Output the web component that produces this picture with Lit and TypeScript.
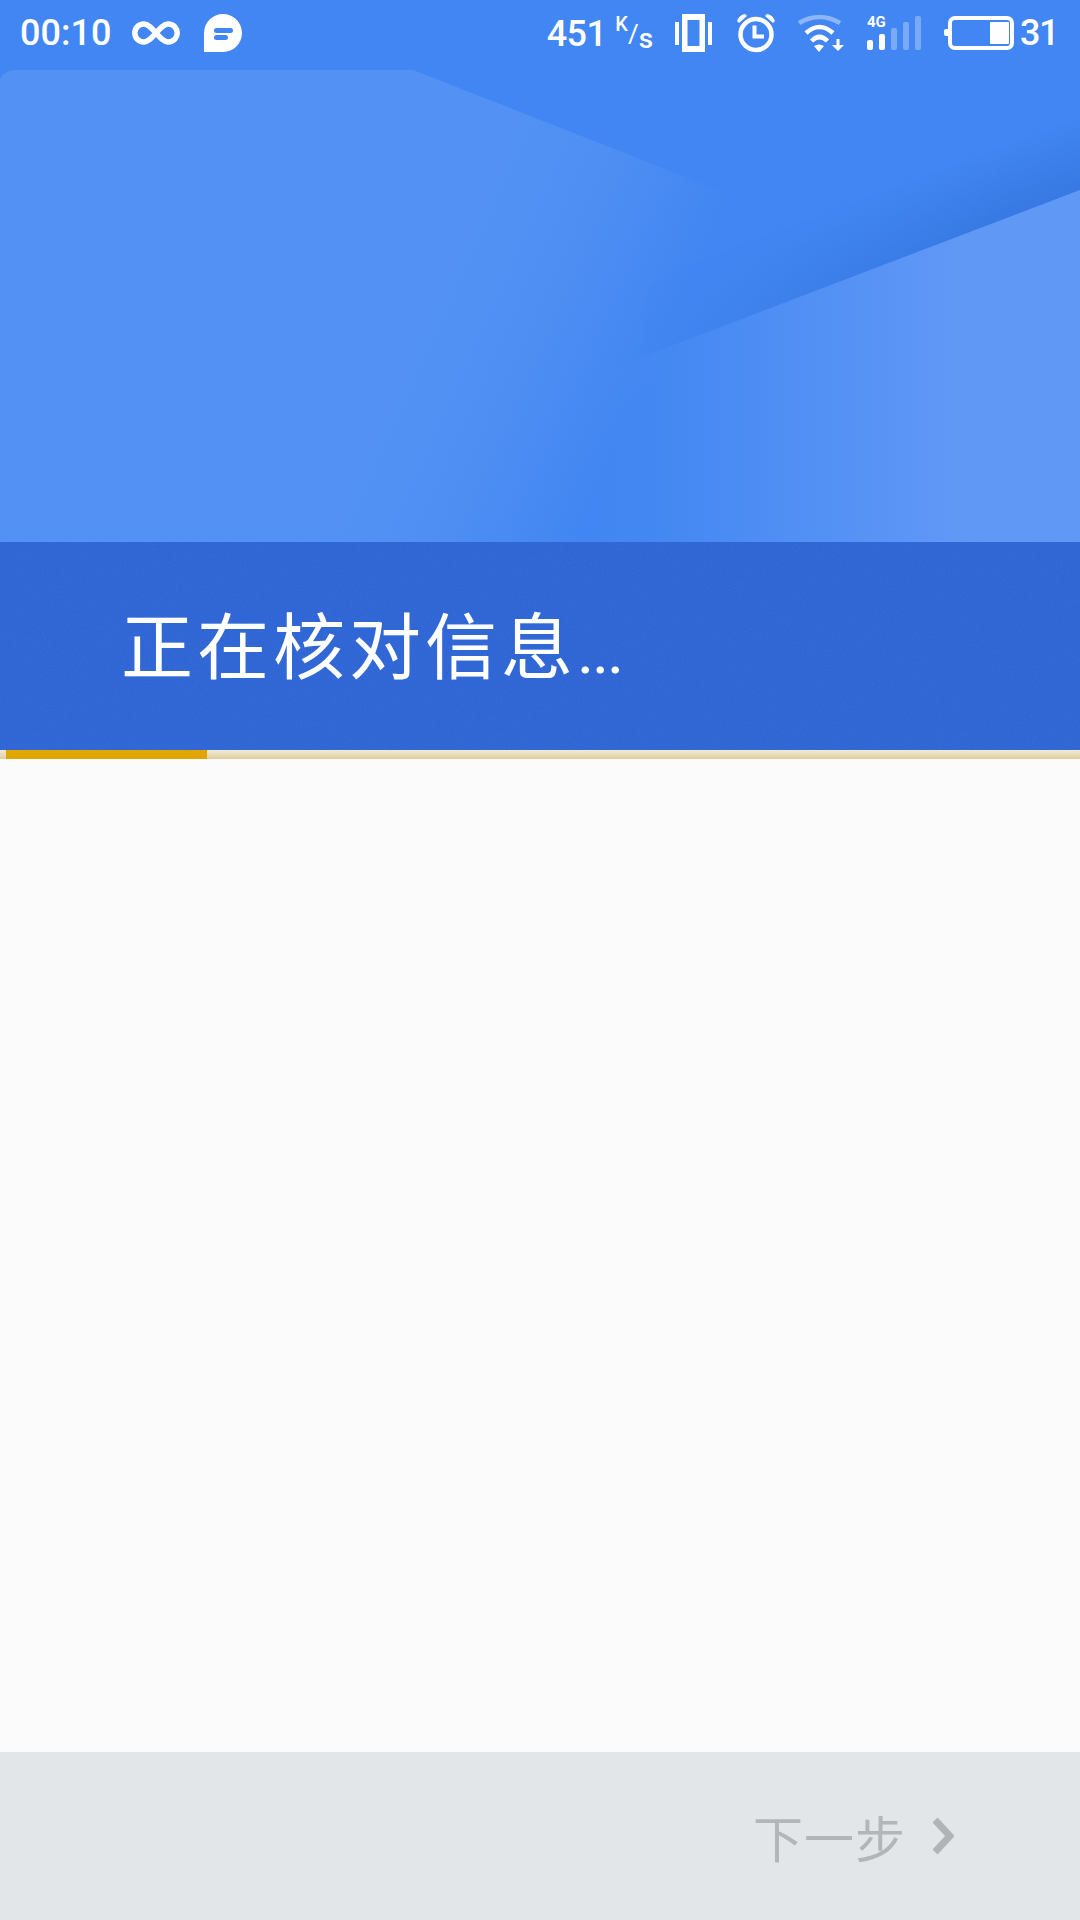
import { LitElement, html, css, svg } from "lit";
import { customElement } from "lit/decorators.js";

@customElement("app-root")
export class AppRoot extends LitElement {
  static styles = css`
    :host { display: block; width: 1080px; height: 1920px; background: #fbfbfb; font-family: Roboto, "Noto Sans CJK SC", sans-serif; overflow: hidden; }
    .page { display: flex; flex-direction: column; height: 1920px; }
    .hero { position: relative; height: 750px; flex: none; background: #4186f2; overflow: hidden; display: flex; flex-direction: column; }
    .art { position: absolute; left: 0; top: 0; width: 1080px; height: 545px; }
    .status { position: relative; height: 66px; display: flex; align-items: center; padding: 0 22px 0 20px; color: #fff; font-size: 36px; font-weight: 500; }
    .left, .right { display: flex; align-items: center; }
    .right { margin-left: auto; }
    .speed { display: block; white-space: nowrap; letter-spacing: -0.6px; }
    .k { font-size: 20px; margin-left: 9px; vertical-align: 15px; letter-spacing: 0; }
    .slash { font-size: 26px; font-weight: 400; vertical-align: 3px; letter-spacing: 0; }
    .s { font-size: 28px; vertical-align: -2px; letter-spacing: 0; }
    .inf { margin-left: 21px; }
    .bubble { margin-left: 24px; }
    .vib { margin-left: 22px; }
    .alarm { margin-left: 24px; }
    .wifi { margin-left: 21px; }
    .sig { position: relative; margin-left: 23px; width: 54px; height: 34px; }
    .sig-label { position: absolute; left: 0; top: -1px; font-size: 15px; font-weight: 700; line-height: 14px; letter-spacing: -0.3px; }
    .bars { position: absolute; left: 0; top: 0; }
    .batt { margin-left: 23px; }
    .level { margin-left: 6px; letter-spacing: -1.5px; }
    .band { position: relative; margin-top: auto; height: 208px; background: #2f66d5; display: flex; align-items: center; padding: 0 0 10px 121px; box-sizing: border-box; color: #fff; font-family: "Noto Sans CJK SC", sans-serif; font-size: 72px; font-weight: 400; letter-spacing: 4px; }
    .noise { position: absolute; inset: 0; width: 100%; height: 100%; opacity: 0.03; }
    .title { position: relative; }
    .dots { font-family: Roboto, sans-serif; font-size: 54px; font-weight: 500; letter-spacing: 0; margin-left: 1px; }
    .track { height: 9px; flex: none; background: linear-gradient(#f2ead2, #dccf9d); display: flex; padding-left: 6px; }
    .fill { width: 201px; background: #e0a500; }
    .body { flex: 1; }
    .foot { height: 168px; flex: none; background: #e2e6e8; display: flex; align-items: center; justify-content: flex-end; padding: 0 126px 0 0; color: #b2b6b8; font-family: "Noto Sans CJK SC", sans-serif; font-size: 50px; font-weight: 400; letter-spacing: 1px; gap: 26px; }
    svg { display: block; flex: none; }
  `;

  render() {
    return html`<div class="page">
      <div class="hero">
        <svg class="art" viewBox="0 0 1080 545">
          <defs>
            <linearGradient id="a" gradientUnits="userSpaceOnUse" x1="430" y1="290" x2="650" y2="390">
              <stop offset="0" stop-color="#5392f4"/><stop offset=".5" stop-color="#4e8ef3"/><stop offset="1" stop-color="#4c8cf3" stop-opacity="0"/>
            </linearGradient>
            <linearGradient id="b" gradientUnits="userSpaceOnUse" x1="590" x2="960" y1="0" y2="0">
              <stop offset="0" stop-color="#6098f6" stop-opacity="0"/><stop offset=".2" stop-color="#6098f6" stop-opacity=".1"/><stop offset=".5" stop-color="#6098f6" stop-opacity=".45"/><stop offset="1" stop-color="#6098f6"/>
            </linearGradient>
            <linearGradient id="s" gradientUnits="userSpaceOnUse" x1="1080" y1="190" x2="1056" y2="126">
              <stop offset="0" stop-color="#3270d8" stop-opacity=".6"/><stop offset="1" stop-color="#3270d8" stop-opacity="0"/>
            </linearGradient>
            <linearGradient id="sf" gradientUnits="userSpaceOnUse" x1="640" x2="1000" y1="0" y2="0">
              <stop offset="0" stop-color="#fff" stop-opacity="0"/><stop offset="1" stop-color="#fff"/>
            </linearGradient>
            <mask id="sm" maskUnits="userSpaceOnUse" x="0" y="0" width="1080" height="545"><rect width="1080" height="545" fill="url(#sf)"/></mask>
            <filter id="n" x="0" y="0" width="100%" height="100%">
              <feTurbulence type="fractalNoise" baseFrequency="0.55" numOctaves="2" seed="4"/>
              <feColorMatrix values="0 0 0 0 1  0 0 0 0 1  0 0 0 0 1  0 0 0 1.6 -0.5"/>
            </filter>
          </defs>
          <path d="M0 82 Q0 72 14 70 L413 70 L800 222 L800 545 L0 545 Z" fill="url(#a)"/>
          <path d="M1080 100 L640 270 L634 360 L1080 190 Z" fill="url(#s)" mask="url(#sm)"/>
          <path d="M1080 190 L634 360 L590 385 L590 545 L1080 545 Z" fill="url(#b)"/>
        </svg>
        ${this.statusBar()}
        <div class="band">
          <svg class="noise" preserveAspectRatio="none"><rect width="100%" height="100%" filter="url(#n)"/></svg>
          <span class="title">正在核对信息<span class="dots">...</span></span>
        </div>
      </div>
      <div class="track"><div class="fill"></div></div>
      <div class="body"></div>
      <div class="foot">
        <span>下一步</span>
        <svg width="22" height="38" viewBox="0 0 22 38"><path d="M3 3 L18 19 L3 35" fill="none" stroke="#b0b4b6" stroke-width="7"/></svg>
      </div>
    </div>`;
  }

  statusBar() {
    return html`<div class="status">
      <div class="left">
        <span>00:10</span>
        <svg class="inf" width="48" height="24" viewBox="0 0 48 24"><path d="M12 3 C6 3 2.800 7.500 2.800 12 C2.800 16.500 6 21 12 21 C20 21 28 3 36 3 C42 3 45.200 7.500 45.200 12 C45.200 16.500 42 21 36 21 C28 21 20 3 12 3 Z" fill="none" stroke="#fff" stroke-width="5.500"/></svg>
        <svg class="bubble" width="38" height="38" viewBox="0 0 38 38"><path fill-rule="evenodd" d="M0 38 V19 A19 19 0 1 1 19 38 Z M12.500 14 a2.500 2.500 0 0 0 0 5 h14 a2.500 2.500 0 0 0 0 -5 Z M12.500 21 a2.500 2.500 0 0 0 0 5 h9 a2.500 2.500 0 0 0 0 -5 Z" fill="#fff"/></svg>
      </div>
      <div class="right">
        <span class="speed">451<span class="k">K</span><span class="slash">/</span><span class="s">s</span></span>
        <svg class="vib" width="37" height="38" viewBox="0 0 37 38"><path fill-rule="evenodd" d="M7 0 H30 V38 H7 Z M12.500 6 V32 H24.500 V6 Z M0 8 H4 V31 H0 Z M33 8 H37 V31 H33 Z" fill="#fff"/></svg>
        <svg class="alarm" width="40" height="40" viewBox="0 0 40 40"><g fill="none" stroke="#fff"><circle cx="20" cy="21.500" r="15.500" stroke-width="4.500"/><path d="M18.500 12.500 V23.500 H28" stroke-width="4"/></g><path d="M1 8 Q3 2 9 1 L11 3 L3 10 Z M39 8 Q37 2 31 1 L29 3 L37 10 Z" fill="#fff"/></svg>
        <svg class="wifi" width="47" height="40" viewBox="0 0 47 40">
          <path d="M2 10 Q22.500 -2 43 10" fill="none" stroke="#fff" stroke-opacity=".4" stroke-width="4.500"/>
          <path d="M9 20 Q22.500 8 36 20" fill="none" stroke="#fff" stroke-width="4.500"/>
          <path d="M14.500 28 Q22.500 20 30.500 28" fill="none" stroke="#fff" stroke-width="4.500"/>
          <path d="M17 33 Q22 30 27 33 L22 39 Z" fill="#fff"/>
          <path d="M39.500 26 H42.500 V32 H47 L41 38 L35 32 H39.500 Z" fill="#fff"/>
        </svg>
        <div class="sig">
          <span class="sig-label">4G</span>
          ${this.signal()}
        </div>
        <svg class="batt" width="70" height="34" viewBox="0 0 70 34"><path d="M0 15 Q0 13 2 13 H4 V20 H2 Q0 20 0 18 Z" fill="#fff"/><rect x="6" y="2" width="62" height="30" rx="5" fill="none" stroke="#fff" stroke-width="4"/><rect x="46" y="6" width="19" height="22" rx="1" fill="#fff"/></svg>
        <span class="level">31</span>
      </div>
    </div>`;
  }

  signal() {
    const bars: [number, number, number][] = [
      [0, 24, 1], [12, 18, 1], [24, 12, 0.3], [36, 6, 0.3], [48, 0, 0.3],
    ];
    return html`<svg class="bars" width="54" height="34" viewBox="0 0 54 34">
      ${bars.map(([x, y, o]) => svg`<rect x=${x} y=${y} width="6" height=${34 - y} rx="2" fill="#fff" fill-opacity=${o}/>`)}
    </svg>`;
  }
}
